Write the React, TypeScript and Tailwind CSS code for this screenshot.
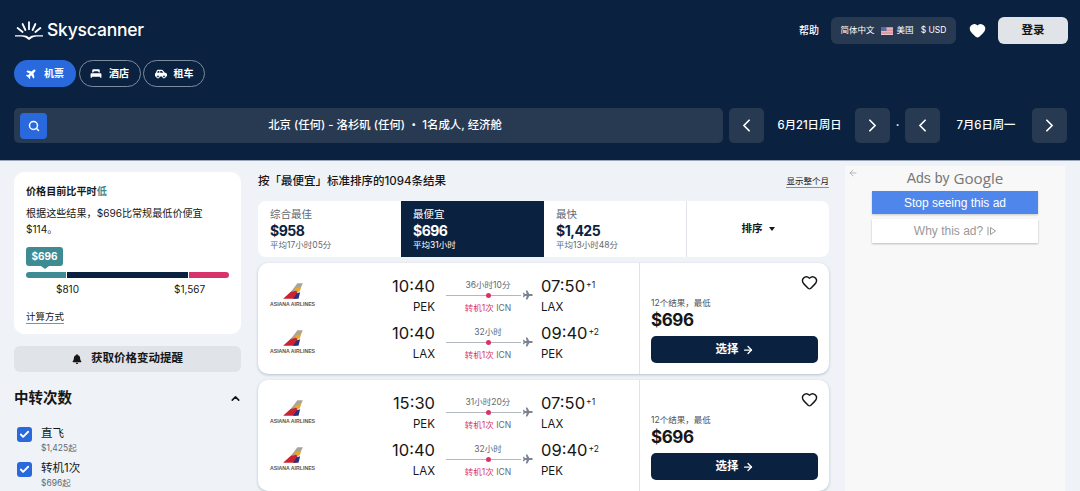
import React from "react";
import { FaBell, FaCarSide, FaPlane } from "react-icons/fa";
import { ArrowLeft, ArrowRight, Check, ChevronLeft, ChevronRight, ChevronUp, Heart, Search } from "lucide-react";

const FONT = "font-['Inter','Noto_Sans_CJK_SC',sans-serif]";

function Logo() {
  return (
    <svg width="30" height="20" viewBox="0 0 30 20" className="shrink-0">
      <g stroke="#fff" strokeWidth="1.8" strokeLinecap="round">
        <path d="M15 1.2v7" />
        <path d="M8.6 3l2.8 6" />
        <path d="M21.4 3l-2.8 6" />
        <path d="M3.6 7l5 4" />
        <path d="M26.4 7l-5 4" />
      </g>
      <path d="M1 14.2h7.5c3 0 5 .8 6.5 2.2 1.500-1.400 3.500-2.200 6.500-2.200H29v1.300h-6c-3 0-5 1-6.500 2.500L15 19l-1.500-1c-1.500-1.500-3.500-2.500-6.500-2.500H1z" fill="#fff" />
    </svg>
  );
}

function PlaneIcon({ className }: { className?: string }) {
  return <FaPlane className={className} />;
}

function BedIcon() {
  return (
    <svg width="12" height="10" viewBox="0 0 14 12" fill="#fff">
      <path d="M2.500 1.500C2.500.7 3.100.2 3.900.2h6.200c.8 0 1.400.5 1.400 1.300v2.700h-1.200c-.3-.9-1-1.400-1.900-1.400H5.600c-.9 0-1.600.5-1.900 1.400H2.500z" />
      <path d="M1.500 5.200h11c.6 0 1 .4 1 1v4.300h-1.600V9.300H2.100v1.200H.5V6.200c0-.6.4-1 1-1z" />
    </svg>
  );
}

function NavPill({ active, icon, label, width }: { active?: boolean; icon: React.ReactNode; label: string; width: string }) {
  return (
    <div
      className={`flex h-[27px] items-center justify-center gap-[7px] rounded-full text-[10px] font-bold text-white ${width} ${
        active ? "bg-[#2a69dc]" : "border border-[#7f8b9c]"
      }`}
    >
      {icon}
      <span>{label}</span>
    </div>
  );
}

function StepButton({ left }: { left?: boolean }) {
  return (
    <div className="flex h-[35px] w-[35px] shrink-0 items-center justify-center rounded-[5px] bg-[#283a52] text-white">
      {left ? <ChevronLeft size={21} strokeWidth={2} /> : <ChevronRight size={21} strokeWidth={2} />}
    </div>
  );
}

function FlagUS() {
  return (
    <svg width="12" height="8" viewBox="0 0 12 8" className="shrink-0">
      <rect width="12" height="8" fill="#f0e4e6" />
      <path d="M0 .6h12M0 2.100h12M0 3.700h12M0 5.200h12M0 6.800h12" stroke="#d27080" strokeWidth=".9" />
      <rect width="5.500" height="4" fill="#5a6a9c" />
    </svg>
  );
}

function Header() {
  return (
    <header className="h-[160px] bg-[#0a2240] pl-[14px] pr-[12px] text-white">
      <div className="flex h-[60px] items-center pt-[1px]">
        <Logo />
        <span className="ml-[3px] font-['Inter',sans-serif] text-[17.500px] font-medium tracking-[-0.2px]">Skyscanner</span>
        <span className="ml-auto text-[10px] font-medium">帮助</span>
        <div className="ml-[12px] flex h-[27px] w-[125px] items-center justify-center gap-[6px] rounded-[6px] bg-[#283a52] text-[8.500px]">
          <span>简体中文</span>
          <FlagUS />
          <span className="-ml-[2px]">美国</span>
          <span className="ml-[1px]">$ USD</span>
        </div>
        <Heart size={17} fill="#fff" stroke="#fff" className="ml-[13px]" />
        <div className="ml-[12px] flex h-[27px] w-[70px] items-center justify-center rounded-[6px] bg-[#e0e3e8] text-[11.500px] font-bold text-[#161616]">
          登录
        </div>
      </div>
      <div className="flex gap-[2.500px]">
        <NavPill active width="w-[62px]" label="机票" icon={<PlaneIcon className="-rotate-45 text-[11px]" />} />
        <NavPill width="w-[62px]" label="酒店" icon={<BedIcon />} />
        <NavPill width="w-[62px]" label="租车" icon={<FaCarSide className="text-[12px]" />} />
      </div>
      <div className="mt-[21px] flex items-center">
        <div className="flex h-[35px] w-[709px] items-center rounded-[5px] bg-[#283a52] pl-[6px]">
          <div className="flex h-[26px] w-[27px] shrink-0 items-center justify-center rounded-[4px] bg-[#2a69dc]">
            <Search size={12} strokeWidth={3} />
          </div>
          <div className="flex-1 text-center text-[11.400px] font-medium">北京 (任何) - 洛杉矶 (任何) ・ 1名成人, 经济舱</div>
        </div>
        <div className="ml-[6px]">
          <StepButton left />
        </div>
        <div className="w-[91px] text-center text-[11.300px] font-medium">6月21日周日</div>
        <StepButton />
        <div className="w-[15px] text-center text-[11px] font-bold">·</div>
        <StepButton left />
        <div className="w-[92px] text-center text-[11.300px] font-medium">7月6日周一</div>
        <StepButton />
      </div>
    </header>
  );
}

function PriceCard() {
  return (
    <section className="h-[162px] rounded-[10px] bg-white px-[12px] pt-[12px] text-[#161616]">
      <p className="text-[10.100px] font-bold leading-[14px]">
        价格目前比平时<span className="text-[#3e8b94]">低</span>
      </p>
      <p className="mt-[7px] text-[10.100px] leading-[16px]">根据这些结果，$696比常规最低价便宜 $114。</p>
      <div className="mt-[10px] flex h-[19px] w-[37px] items-center justify-center rounded-[3px] bg-[#3e8b94] text-[10px] font-bold text-white">
        $696
      </div>
      <div className="ml-[15px] h-0 w-0 border-x-[4px] border-t-[3px] border-x-transparent border-t-[#3e8b94]" />
      <div className="mt-[3px] flex h-[6px] gap-[1px]">
        <div className="w-[40px] rounded-l-full bg-[#3e8b94]" />
        <div className="w-[121px] bg-[#0a2240]" />
        <div className="flex-1 rounded-r-full bg-[#d8326a]" />
      </div>
      <div className="relative mt-[4px] h-[14px] text-[10px] leading-[14px]">
        <span className="absolute left-[30px]">$810</span>
        <span className="absolute left-[148px]">$1,567</span>
      </div>
      <div className="mt-[14px] inline-block border-b border-[#8a8f96] text-[9.500px] leading-[13px]">计算方式</div>
    </section>
  );
}

function StopOption({ label, price }: { label: string; price: string }) {
  return (
    <div className="flex h-[35px] pl-[3px]">
      <div className="mt-[1px] flex h-[15px] w-[15px] items-center justify-center rounded-[3px] bg-[#2a69dc] text-white">
        <Check size={11} strokeWidth={4} />
      </div>
      <div className="ml-[9px]">
        <div className="text-[11.500px] leading-[15px] text-[#161616]">{label}</div>
        <div className="mt-[1px] text-[8.500px] leading-[12px] text-[#626971]">{price}</div>
      </div>
    </div>
  );
}

function Sidebar() {
  return (
    <aside className="w-[227px] shrink-0 pt-[11px]">
      <PriceCard />
      <div className="mt-[12px] flex h-[26px] items-center justify-center gap-[9px] rounded-[6px] bg-[#e0e3e8] text-[11.500px] font-bold text-[#161616]">
        <FaBell className="text-[10px]" />
        <span>获取价格变动提醒</span>
      </div>
      <div className="mt-[16px] flex items-center justify-between text-[#161616]">
        <h2 className="text-[14.500px] font-bold leading-[20px]">中转次数</h2>
        <ChevronUp size={13} strokeWidth={3} className="mr-[-1px]" />
      </div>
      <div className="mt-[18px]">
        <StopOption label="直飞" price="$1,425起" />
        <StopOption label="转机1次" price="$696起" />
      </div>
    </aside>
  );
}

function SortTab({ label, price, sub, active, width }: { label: string; price: string; sub: string; active?: boolean; width: string }) {
  return (
    <div className={`${width} h-full shrink-0 pl-[12px] pt-[6px] ${active ? "bg-[#0a2240] text-white" : "text-[#0a2240]"}`}>
      <div className={`text-[10.500px] leading-[15px] ${active ? "text-white" : "text-[#626971]"}`}>{label}</div>
      <div className="text-[14px] font-bold leading-[18px] tracking-[-0.5px]">{price}</div>
      <div className={`text-[8.500px] leading-[11px] ${active ? "text-white" : "text-[#626971]"}`}>{sub}</div>
    </div>
  );
}

function SortTabs() {
  return (
    <div className="mt-[11px] flex h-[56px] overflow-hidden rounded-[8px] bg-white">
      <SortTab width="w-[143px]" label="综合最佳" price="$958" sub="平均17小时05分" />
      <SortTab width="w-[143px]" active label="最便宜" price="$696" sub="平均31小时" />
      <SortTab width="w-[142px]" label="最快" price="$1,425" sub="平均13小时48分" />
      <div className="flex flex-1 items-center justify-center gap-[6px] border-l border-[#e0e3e8] text-[10.500px] font-bold text-[#161616]">
        <span>排序</span>
        <span className="h-0 w-0 border-x-[3.500px] border-t-[4px] border-x-transparent border-t-[#161616]" />
      </div>
    </div>
  );
}

function AirlineMark() {
  return (
    <div className="flex w-[45px] shrink-0 flex-col items-center">
      <svg width="22" height="18" viewBox="0 0 20 16">
        <path d="M1 15L11 6h3.500L13 15z" fill="#c8232f" />
        <path d="M8 9L14 1h5l-3 6z" fill="#aaa498" />
        <path d="M11 6l3-1 3.500-.5-1.500 4-2 .5z" fill="#e8a92a" />
        <path d="M10 15l3.500-5 3-.8L15 15z" fill="#2a2f7e" />
      </svg>
      <span className="mt-[1px] whitespace-nowrap font-['Liberation_Sans',sans-serif] text-[5.200px] font-bold leading-[7px] text-[#555]">
        ASIANA AIRLINES
      </span>
    </div>
  );
}

type Leg = { dep: string; from: string; dur: string; arr: string; plus: string; to: string };

function LegRow({ leg }: { leg: Leg }) {
  return (
    <div className="flex h-[40px] items-center text-[#161616]">
      <AirlineMark />
      <div className="w-[120px] shrink-0 text-right">
        <div className="mb-[2px] text-[16.500px] leading-[22px]">{leg.dep}</div>
        <div className="text-[11.500px] leading-[16px]">{leg.from}</div>
      </div>
      <div className="ml-[11px] h-[40px] w-[87px] shrink-0 pt-[4px] text-center">
        <div className="pr-[3px] text-[8.500px] leading-[12px] text-[#626971]">{leg.dur}</div>
        <div className="-mt-[1px] flex h-[10px] items-center">
          <div className="relative h-[1px] w-[76px] bg-[#b2b6bd]">
            <div className="absolute -top-[2px] left-[40px] h-[5px] w-[5px] rounded-full bg-[#d8326a]" />
          </div>
          <FaPlane className="ml-[2px] text-[10px] text-[#7b8290]" />
        </div>
        <div className="mt-[2px] pr-[3px] text-[8.500px] leading-[12px] text-[#d8326a]">
          转机1次 <span className="text-[#626971]">ICN</span>
        </div>
      </div>
      <div className="ml-[8px]">
        <div className="mb-[2px] text-[16.500px] leading-[22px]">
          {leg.arr}
          <sup className="ml-[1px] text-[8.500px]">{leg.plus}</sup>
        </div>
        <div className="text-[11.500px] leading-[16px]">{leg.to}</div>
      </div>
    </div>
  );
}

function FlightCard({ legs }: { legs: Leg[] }) {
  return (
    <article className="flex h-[111px] shrink-0 rounded-[10px] bg-white shadow-[0_1px_3px_rgba(10,34,64,0.25)]">
      <div className="flex w-[382px] shrink-0 flex-col gap-[7px] border-r border-[#e0e3e8] px-[12px] pt-[12px]">
        {legs.map((leg) => (
          <LegRow key={leg.from + leg.dep} leg={leg} />
        ))}
      </div>
      <div className="flex flex-1 flex-col px-[11px] pt-[11px]">
        <Heart size={17} strokeWidth={2} className="self-end text-[#161616]" />
        <div className="mt-[6px] text-[8.500px] leading-[12px] text-[#4b5158]">12个结果，最低</div>
        <div className="text-[17px] font-bold leading-[22px] tracking-[-0.4px] text-[#161616]">$696</div>
        <div className="mt-[5px] flex h-[27px] items-center justify-center gap-[3px] rounded-[5px] bg-[#0a2240] text-[11.500px] font-bold text-white">
          <span>选择</span>
          <ArrowRight size={12} strokeWidth={2.500} />
        </div>
      </div>
    </article>
  );
}

const CARDS: Leg[][] = [
  [
    { dep: "10:40", from: "PEK", dur: "36小时10分", arr: "07:50", plus: "+1", to: "LAX" },
    { dep: "10:40", from: "LAX", dur: "32小时", arr: "09:40", plus: "+2", to: "PEK" },
  ],
  [
    { dep: "15:30", from: "PEK", dur: "31小时20分", arr: "07:50", plus: "+1", to: "LAX" },
    { dep: "10:40", from: "LAX", dur: "32小时", arr: "09:40", plus: "+2", to: "PEK" },
  ],
];

function Results() {
  return (
    <main className="ml-[17px] w-[571px] shrink-0 pt-[12px]">
      <div className="flex h-[17px] items-center justify-between text-[#161616]">
        <span className="text-[11.500px] font-medium">按「最便宜」标准排序的1094条结果</span>
        <span className="border-b border-[#8a8f96] text-[8.500px] leading-[11px]">显示整个月</span>
      </div>
      <SortTabs />
      <div className="mt-[6px] flex flex-col gap-[6px]">
        {CARDS.map((legs) => (
          <FlightCard key={legs[0].dep} legs={legs} />
        ))}
      </div>
    </main>
  );
}

function AdPanel() {
  return (
    <div className="relative ml-[16px] mt-[5px] h-full w-[220px] shrink-0 bg-[#f8f8f8] px-[27px] pt-[3px] font-['Liberation_Sans',sans-serif]">
      <ArrowLeft size={10} className="absolute left-[3px] top-[2px] text-[#aaa]" />
      <div className="flex h-[18px] items-center justify-center gap-[4px] text-[#777]">
        <span className="text-[14px]">Ads by</span>
        <span className="font-['Open_Sans',sans-serif] text-[15.200px] leading-[18px]">Google</span>
      </div>
      <div className="mt-[4px] flex h-[23px] items-center justify-center bg-[#4f86ec] text-[12px] text-white shadow-[0_1px_2px_rgba(0,0,0,0.2)]">
        Stop seeing this ad
      </div>
      <div className="mt-[5px] flex h-[24px] items-center justify-center gap-[4px] bg-white text-[12px] text-[#999] shadow-[0_1px_2px_rgba(0,0,0,0.25)]">
        <span>Why this ad?</span>
        <svg width="9" height="10" viewBox="0 0 9 10" fill="none" stroke="#999">
          <path d="M1 .8v8.400" />
          <path d="M3.500 1.500l5 3.500-5 3.500z" />
        </svg>
      </div>
    </div>
  );
}

export default function App() {
  return (
    <div className={`h-[491px] w-[1080px] overflow-hidden bg-[#eff3f8] ${FONT}`}>
      <Header />
      <div className="flex h-[331px] border-t border-[#9aa5b5] pl-[14px]">
        <Sidebar />
        <Results />
        <AdPanel />
      </div>
    </div>
  );
}
